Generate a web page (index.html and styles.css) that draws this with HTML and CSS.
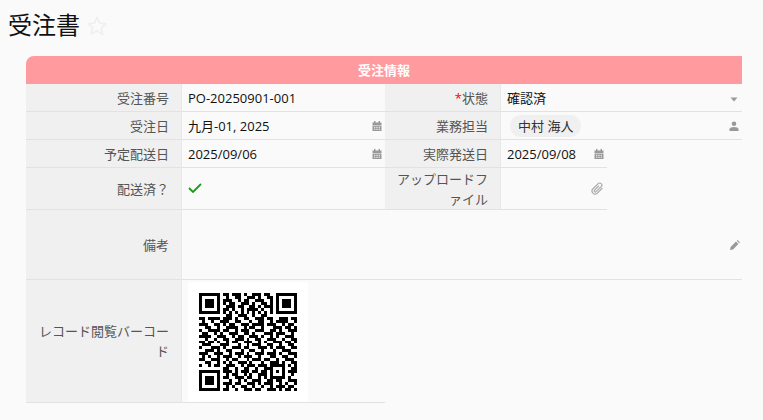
FILE: index.html
```html
<!DOCTYPE html>
<html lang="ja">

<head>
    <meta charset="UTF-8">
    <meta name="viewport" content="width=device-width, initial-scale=1.0">
    <title>受注書</title>
    <link rel="stylesheet" href="styles.css">
</head>

<body>
    <svg class="icon-defs" aria-hidden="true">
        <symbol id="icon-calendar" viewBox="0 0 10 10">
            <path d="M2 0h1.500v1.500h3V0H8v1.500h1.500V4H.5V1.500H2zM.5 4.600h9V10H.5zM2 5.800v1h1.300v-1zm2.300 0v1h1.400v-1zm2.400 0v1H8v-1zM2 7.800v1h1.300v-1zm2.300 0v1h1.400v-1zm2.400 0v1H8v-1z" fill-rule="evenodd" />
        </symbol>
    </svg>

    <header class="page-title">
        <h1>受注書</h1>
        <svg class="star" viewBox="0 0 24 24" width="22" height="22">
            <path d="M12 2.500l2.900 6.300 6.900.8-5.100 4.700 1.400 6.800L12 17.100l-6.100 3.400 1.400-6.800L2.200 9.600l6.900-.8z" fill="none" stroke="#f0f0f0" stroke-width="2" stroke-linejoin="round" />
        </svg>
    </header>

    <section class="form">
        <div class="form-header">受注情報</div>
        <div class="form-grid">
            <div class="label">受注番号</div>
            <div class="value">PO-20250901-001</div>
            <div class="label"><span class="required">*</span>状態</div>
            <div class="value span-2">
                確認済
                <svg class="icon" viewBox="0 0 10 10"><path d="M1.500 4.500h7L5 8.500z" /></svg>
            </div>

            <div class="label">受注日</div>
            <div class="value">
                九月-01, 2025
                <svg class="icon"><use href="#icon-calendar" /></svg>
            </div>
            <div class="label">業務担当</div>
            <div class="value span-2">
                <span class="chip">中村 海人</span>
                <svg class="icon" viewBox="0 0 10 10"><circle cx="5" cy="2.700" r="2.300" /><path d="M.5 10V8.300C.5 6.800 2.500 6 5 6s4.500.8 4.500 2.300V10z" /></svg>
            </div>

            <div class="label">予定配送日</div>
            <div class="value">
                2025/09/06
                <svg class="icon"><use href="#icon-calendar" /></svg>
            </div>
            <div class="label">実際発送日</div>
            <div class="value">
                2025/09/08
                <svg class="icon"><use href="#icon-calendar" /></svg>
            </div>
            <div class="empty"></div>

            <div class="label">配送済？</div>
            <div class="value">
                <svg class="check" viewBox="0 0 14 10" width="14" height="10"><path d="M1 5l4 4 8-8" fill="none" stroke="#1a9c1a" stroke-width="1.800" /></svg>
            </div>
            <div class="label">アップロードフ<br>ァイル</div>
            <div class="value">
                <span></span>
                <svg class="icon icon-clip" viewBox="0 0 12 12"><path d="M10.500 5.500l-4.600 4.700c-1.200 1.200-3 1.200-4.100.1s-1.100-2.900.1-4.100l4.700-4.700c.8-.8 2-.8 2.800 0s.8 2 0 2.800L4.700 8.900c-.4.400-1 .4-1.400 0s-.4-1 0-1.400l4-4" fill="none" stroke="#aaa" stroke-width="1.100" /></svg>
            </div>
            <div class="empty"></div>

            <div class="label">備考</div>
            <div class="value span-4 value-note">
                <span></span>
                <svg class="icon" viewBox="0 0 10 10"><path d="M0 10l.6-3L6 1.600l2.400 2.400L3 9.400zM6.800.8L7.600 0 10 2.400l-.8.800z" /></svg>
            </div>

            <div class="label">レコード閲覧バーコード</div>
            <div class="value value-qr">
                <div class="qr">
                    <svg viewBox="0 0 33 33" width="98" height="98" shape-rendering="crispEdges">
                        <path fill="none" stroke="#000" d="M0 .5h7M26 .5h7M0 1.500h1M6 1.500h1M26 1.500h1M32 1.500h1M0 2.500h1M2 2.500h3M6 2.500h1M26 2.500h1M28 2.500h3M32 2.500h1M0 3.500h1M2 3.500h3M6 3.500h1M26 3.500h1M28 3.500h3M32 3.500h1M0 4.500h1M2 4.500h3M6 4.500h1M26 4.500h1M28 4.500h3M32 4.500h1M0 5.500h1M6 5.500h1M26 5.500h1M32 5.500h1M0 6.500h7M26 6.500h7M0 26.500h7M0 27.500h1M6 27.500h1M0 28.500h1M2 28.500h3M6 28.500h1M0 29.500h1M2 29.500h3M6 29.500h1M0 30.500h1M2 30.500h3M6 30.500h1M0 31.500h1M6 31.500h1M0 32.500h7" />
                        <path fill="none" stroke="#000" d="M8 .5h2M11 .5h3M15 .5h1M18 .5h3M22 .5h2M9 1.500h1M12 1.500h2M16 1.500h3M20 1.500h1M23 1.500h2M8 2.500h3M13 2.500h1M15 2.500h2M19 2.500h3M24 2.500h1M8 3.500h1M10 3.500h2M14 3.500h3M18 3.500h1M21 3.500h2M24 3.500h1M9 4.500h3M13 4.500h2M17 4.500h2M20 4.500h1M22 4.500h3M8 5.500h2M11 5.500h1M14 5.500h1M16 5.500h4M21 5.500h1M24 5.500h1M8 6.500h1M10 6.500h1M12 6.500h1M14 6.500h1M16 6.500h1M18 6.500h1M20 6.500h1M22 6.500h1M24 6.500h1M9 7.500h2M13 7.500h3M18 7.500h1M21 7.500h2" />
                        <path fill="none" stroke="#000" d="M0 8.500h2M3 8.500h3M6 8.500h1M8 8.500h3M12 8.500h1M15 8.500h2M19 8.500h3M23 8.500h2M27 8.500h3M31 8.500h2M1 9.500h1M4 9.500h1M7 9.500h3M12 9.500h2M17 9.500h1M20 9.500h2M24 9.500h1M26 9.500h4M32 9.500h1M0 10.500h3M5 10.500h2M8 10.500h1M10 10.500h2M14 10.500h3M18 10.500h4M23 10.500h3M28 10.500h1M30 10.500h2M2 11.500h2M6 11.500h1M9 11.500h4M15 11.500h1M17 11.500h2M21 11.500h1M25 11.500h3M29 11.500h2M32 11.500h1M0 12.500h1M3 12.500h4M8 12.500h2M12 12.500h1M14 12.500h3M19 12.500h3M24 12.500h2M27 12.500h1M30 12.500h3M1 13.500h2M5 13.500h1M7 13.500h1M10 13.500h3M15 13.500h2M18 13.500h1M22 13.500h3M26 13.500h3M31 13.500h1M0 14.500h4M6 14.500h3M11 14.500h1M13 14.500h2M17 14.500h3M21 14.500h1M24 14.500h1M26 14.500h1M29 14.500h3M2 15.500h1M5 15.500h1M8 15.500h2M12 15.500h3M16 15.500h1M19 15.500h2M23 15.500h3M28 15.500h1M31 15.500h2M0 16.500h2M3 16.500h2M6 16.500h1M9 16.500h1M11 16.500h2M15 16.500h3M20 16.500h1M22 16.500h1M25 16.500h3M29 16.500h2M32 16.500h1M1 17.500h3M7 17.500h3M13 17.500h1M16 17.500h1M18 17.500h3M23 17.500h2M27 17.500h1M30 17.500h2M0 18.500h1M4 18.500h3M8 18.500h1M11 18.500h3M15 18.500h2M20 18.500h3M24 18.500h1M26 18.500h3M31 18.500h2M2 19.500h3M6 19.500h1M9 19.500h2M14 19.500h1M17 19.500h2M21 19.500h1M25 19.500h1M28 19.500h3M0 20.500h3M5 20.500h3M10 20.500h1M12 20.500h3M16 20.500h1M19 20.500h3M23 20.500h3M27 20.500h1M30 20.500h3M1 21.500h1M3 21.500h1M6 21.500h1M8 21.500h3M13 21.500h1M15 21.500h3M20 21.500h1M24 21.500h2M28 21.500h2M32 21.500h1M0 22.500h2M4 22.500h3M9 22.500h1M11 22.500h2M16 22.500h1M18 22.500h3M22 22.500h2M26 22.500h1M29 22.500h3M2 23.500h2M6 23.500h1M8 23.500h1M10 23.500h1M13 23.500h3M17 23.500h1M21 23.500h1M24 23.500h3M28 23.500h1M31 23.500h2M0 24.500h1M3 24.500h1M5 24.500h2M9 24.500h3M14 24.500h1M16 24.500h3M20 24.500h3M24 24.500h5M30 24.500h1M32 24.500h1" />
                        <path fill="none" stroke="#000" d="M8 25.500h2M12 25.500h1M15 25.500h2M19 25.500h1M22 25.500h3M28 25.500h1M31 25.500h2M8 26.500h3M12 26.500h1M14 26.500h3M18 26.500h2M21 26.500h2M24 26.500h1M26 26.500h1M28 26.500h1M30 26.500h3M9 27.500h1M11 27.500h2M15 27.500h1M17 27.500h1M20 27.500h3M24 27.500h1M28 27.500h1M31 27.500h1M8 28.500h2M12 28.500h3M16 28.500h2M20 28.500h1M22 28.500h1M24 28.500h5M30 28.500h1M10 29.500h1M13 29.500h1M15 29.500h1M18 29.500h3M23 29.500h2M26 29.500h2M30 29.500h3M8 30.500h3M12 30.500h2M16 30.500h3M20 30.500h1M22 30.500h3M27 30.500h1M29 30.500h1M32 30.500h1M9 31.500h1M11 31.500h1M14 31.500h2M18 31.500h1M21 31.500h1M24 31.500h1M26 31.500h3M30 31.500h2M8 32.500h2M12 32.500h1M15 32.500h3M19 32.500h2M23 32.500h3M27 32.500h1M29 32.500h2M32 32.500h1" />
                    </svg>
                </div>
            </div>
        </div>
    </section>
</body>

</html>
```

FILE: styles.css
```css
body {
    margin: 0;
    height: 420px;
    overflow: hidden;
    background: #fafafa;
    color: #111;
    font-family: "Open Sans", "Noto Sans CJK JP", sans-serif;
    font-size: 13px;
}

.icon-defs {
    display: none;
}

.page-title {
    display: flex;
    align-items: center;
    gap: 6px;
    height: 56px;
    padding-left: 8px;
    box-sizing: border-box;
    padding-bottom: 6px;
}

.page-title h1 {
    margin: 0;
    font-size: 24px;
    font-weight: 400;
    line-height: 1;
}

.star {
    margin-top: 2px;
}

.form {
    margin: 0 21px 0 26px;
}

.form-header {
    height: 28px;
    line-height: 28px;
    text-align: center;
    background: #ff9a9f;
    color: #fff;
    font-weight: 700;
    border-radius: 8px 0 0 0;
}

.form-grid {
    display: grid;
    grid-template-columns: 156px 203px 116px 106px 1fr;
    grid-template-rows: 28px 28px 28px 42px 70px 123px;
}

.label {
    display: flex;
    align-items: center;
    justify-content: flex-end;
    text-align: right;
    padding: 0 12px 0 10px;
    background: #f0f0f0;
    color: #555;
    line-height: 20px;
    border-right: 1px solid #e8e8e8;
    border-bottom: 1px solid #e2e2e2;
}

.value {
    display: flex;
    align-items: center;
    justify-content: space-between;
    padding: 0 3px 0 6px;
    border-bottom: 1px solid #e2e2e2;
}

.span-2 {
    grid-column: span 2;
}

.span-4 {
    grid-column: span 4;
}

.value-note {
    padding-right: 2px;
}

.value-qr {
    grid-column: span 1;
    align-items: flex-start;
    justify-content: flex-start;
    padding-top: 2px;
}

.empty {
    grid-column: 5;
}

.required {
    color: #f00;
}

.icon {
    flex: none;
    width: 10px;
    height: 10px;
    fill: #999;
}

.icon-clip {
    width: 13px;
    height: 13px;
}

.check {
    margin-bottom: 2px;
}

.chip {
    margin-left: 3px;
    padding: 0 8px;
    height: 22px;
    line-height: 22px;
    border-radius: 11px;
    background: #f0f0f0;
    color: #333;
}

.qr {
    display: flex;
    padding: 11px;
    background: #fff;
}
```
